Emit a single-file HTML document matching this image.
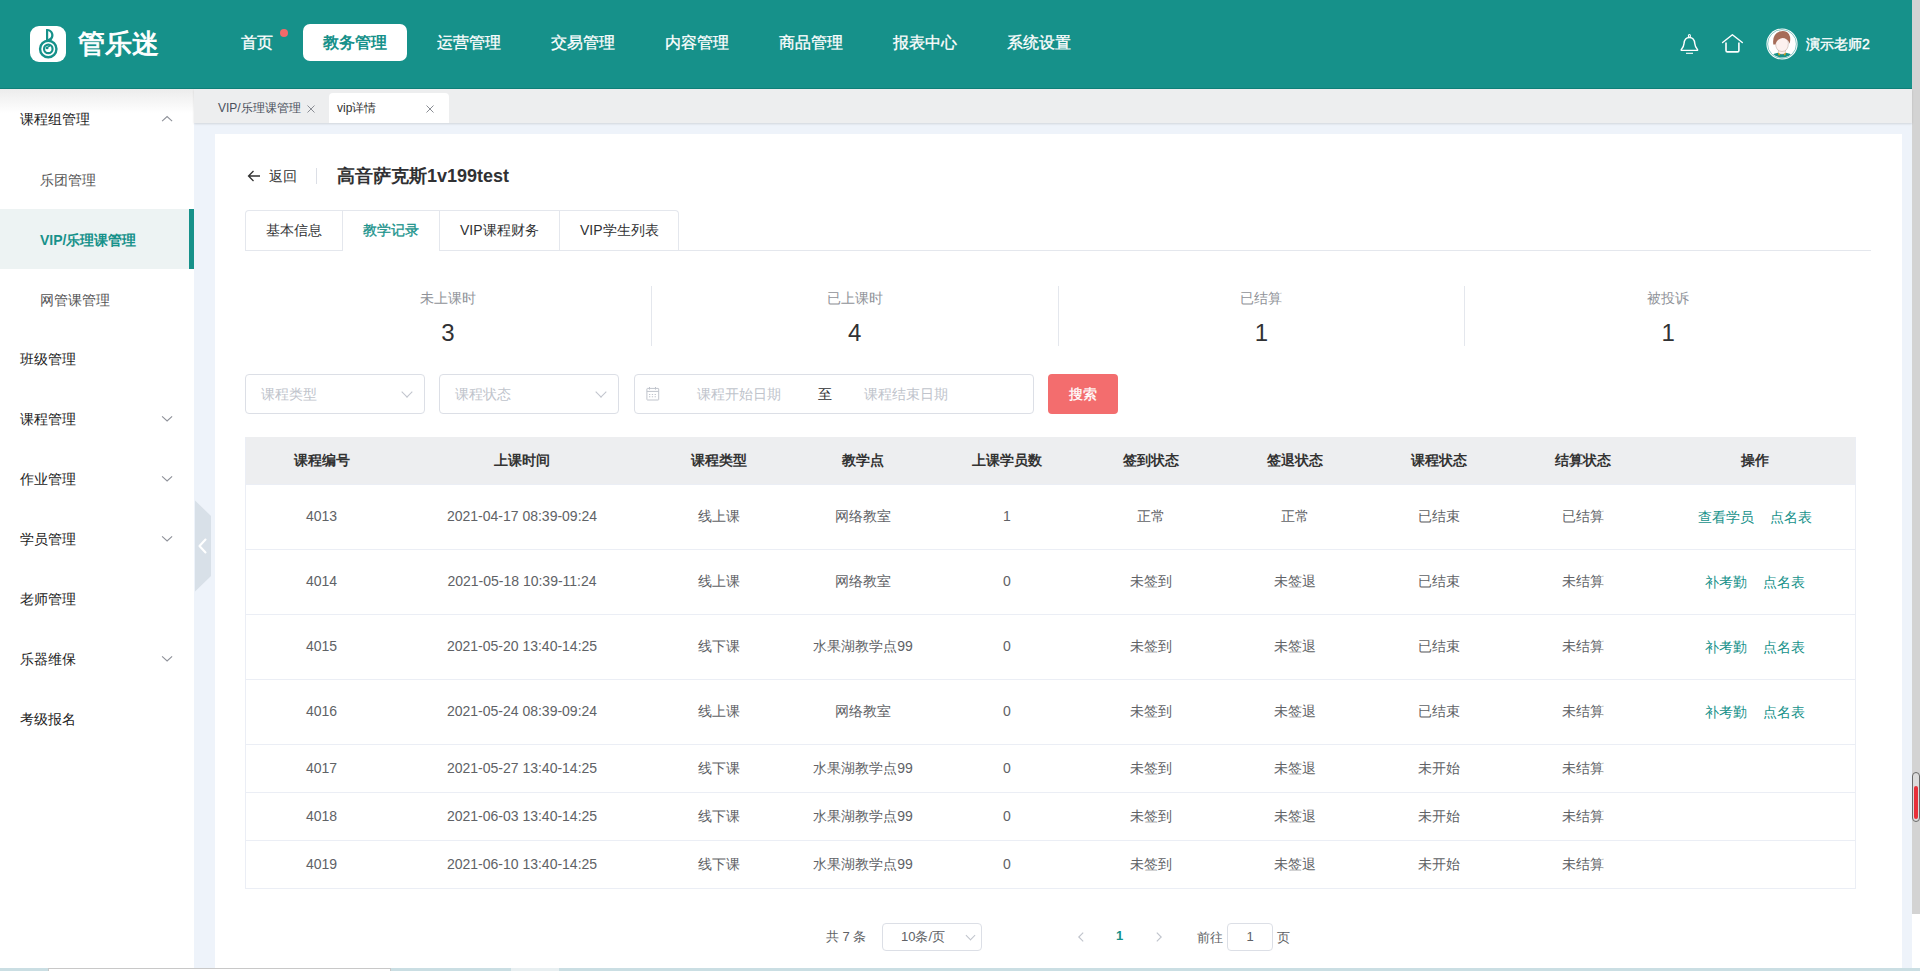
<!DOCTYPE html>
<html><head><meta charset="utf-8">
<style>
*{box-sizing:border-box;margin:0;padding:0}
html,body{width:1920px;height:971px;overflow:hidden;background:#fff;font-family:"Liberation Sans",sans-serif;}
.abs{position:absolute}
#hdr{position:absolute;left:0;top:0;width:1912px;height:89px;background:#16918A;border-bottom:1px solid #0f8079}
#logo{left:30px;top:26px;width:36px;height:36px;background:#fff;border-radius:9px}
#brand{left:78px;top:24px;font-size:27px;line-height:40px;color:#fff;letter-spacing:0px;-webkit-text-stroke:0.9px #fff}
.nav{position:absolute;top:24px;height:37px;line-height:37px;font-size:16px;color:#fff;white-space:nowrap;-webkit-text-stroke-width:0.3px}
.nav.on{background:#fff;color:#16918A;font-weight:bold;border-radius:7px;padding:0 20px;-webkit-text-stroke-width:0}
#dot{left:280px;top:29px;width:8px;height:8px;border-radius:50%;background:#f26a6a}
#uname{left:1806px;top:34px;font-size:14px;line-height:20px;color:#fff;-webkit-text-stroke-width:0.4px}
#scroll{left:1912px;top:0;width:8px;height:914px;background:#d3d3d3}
#side{left:0;top:89px;width:195px;height:879px;background:#fff;border-right:1px solid #e4e6ea}
#sideShadow{left:0;top:89px;width:194px;height:24px;background:linear-gradient(#ececec,rgba(255,255,255,0))}
.si{position:absolute;left:0;width:194px;height:60px;line-height:60px;font-size:14px;color:#222;padding-left:20px}
.si.sub{padding-left:40px;color:#555;line-height:62px}
.si.act{background:#EDF3F3;color:#16918A;font-weight:bold;width:194px}
.si.act:after{content:"";position:absolute;right:0;top:0;width:5px;height:60px;background:#16918A}
.chev{position:absolute;left:163px;top:26px;width:8px;height:8px;border-left:1px solid #999;border-bottom:1px solid #999;transform:rotate(-45deg)}
.chev.up{transform:rotate(135deg);top:29px}
#main{left:194px;top:89px;width:1718px;height:879px;background:#EEF3FA}
#tabs{left:194px;top:89px;width:1718px;height:34px;background:#EDEEEF;box-shadow:0 1px 2px rgba(0,0,0,0.12)}
.ttab{position:absolute;top:4px;height:30px;line-height:30px;font-size:12px;color:#4a505c}
#card{left:215px;top:134px;width:1687px;height:834px;background:#fff}
.txt{position:absolute;white-space:nowrap}
#taskbar{left:0;top:968px;width:1920px;height:3px;background:#CADEE3}
#tbl{position:absolute;left:245px;top:437px;width:1611px;border-left:1px solid #EBEEF5;border-right:1px solid #EBEEF5}
.tr{display:flex;border-bottom:1px solid #EBEEF5}
.tc{text-align:center;font-size:14px;color:#606266;white-space:nowrap;position:relative;top:-1px}
.th .tc{top:0}
.sm .tc{top:0}
.th{background:#EDEEF0}
.th .tc{font-weight:bold;color:#333}
.lk{color:#16918A;margin:0 8px;position:relative;top:1px}
.sel{position:absolute;border:1px solid #DCDFE6;border-radius:4px;background:#fff}
.ph{color:#C0C4CC;font-size:14px}
.dchev{position:absolute;width:8px;height:8px;border-left:1px solid #C0C4CC;border-bottom:1px solid #C0C4CC;transform:rotate(-45deg)}
</style></head><body>

<div id="hdr"></div>
<div id="logo" class="abs">
<svg width="36" height="36" viewBox="0 0 36 36">
 <circle cx="18.25" cy="23" r="8.2" fill="none" stroke="#16918A" stroke-width="2.4"/>
 <circle cx="18.3" cy="22.9" r="4.25" fill="none" stroke="#16918A" stroke-width="2.2"/>
 <circle cx="17.1" cy="21.9" r="1.45" fill="#16918A"/>
 <path fill="#16918A" d="M17.6 20.5 L19.6 19.3 L20.2 20.4 L18.4 21.6 Z"/>
 <path fill-rule="evenodd" fill="#16918A" d="M16 3 H17.5 C21.5 3.3 23.6 6.5 23.5 9.3 C23.4 11.5 22.6 12.8 21.5 14.2 L16 14.6 Z M18.2 4.9 C20.3 5.6 21.3 7.4 21.2 9.3 C21.1 10.9 20.3 12.2 18.2 12.9 Z"/>
</svg>
</div>
<div id="brand" class="abs">管乐迷</div>

<div class="nav" style="left:241px">首页</div>
<div id="dot" class="abs"></div>
<div class="nav on" style="left:303px">教务管理</div>
<div class="nav" style="left:437px">运营管理</div>
<div class="nav" style="left:551px">交易管理</div>
<div class="nav" style="left:665px">内容管理</div>
<div class="nav" style="left:779px">商品管理</div>
<div class="nav" style="left:893px">报表中心</div>
<div class="nav" style="left:1007px">系统设置</div>

<!-- bell -->
<svg class="abs" style="left:1679px;top:33px" width="22" height="22" viewBox="0 0 22 22">
 <path d="M10.4 4.5 C6.6 4.5 5.3 7.2 5 10.6 C4.7 13.4 3.7 15 2.5 16.2 Q1.5 17.4 3.1 17.4 H17.7 Q19.3 17.4 18.3 16.2 C17.1 15 16.1 13.4 15.8 10.6 C15.5 7.2 14.2 4.5 10.4 4.5 Z" fill="none" stroke="#fff" stroke-width="1.4" stroke-linejoin="round"/>
 <ellipse cx="10.4" cy="2.9" rx="1.05" ry="1.35" fill="none" stroke="#fff" stroke-width="1.1"/>
 <line x1="7" y1="20.3" x2="14" y2="20.3" stroke="#fff" stroke-width="1.1"/>
</svg>
<!-- home -->
<svg class="abs" style="left:1720px;top:33px" width="24" height="22" viewBox="0 0 24 22">
 <path d="M2.6 9.5 L12.4 1.7 L22.3 9.5" fill="none" stroke="#fff" stroke-width="1.45" stroke-linejoin="round" stroke-linecap="round"/>
 <path d="M6 9.4 V17.5 Q6 18.9 7.4 18.9 H17.5 Q18.9 18.9 18.9 17.5 V9.4" fill="none" stroke="#fff" stroke-width="1.6"/>
</svg>
<!-- avatar -->
<svg class="abs" style="left:1766px;top:28px" width="32" height="32" viewBox="0 0 32 32">
 <circle cx="16" cy="16" r="15.6" fill="#fff"/>
 <circle cx="16" cy="16" r="14.4" fill="none" stroke="#16918A" stroke-width="0.5"/>
 <clipPath id="cp"><circle cx="16" cy="16" r="13.6"/></clipPath>
 <g clip-path="url(#cp)">
  <path d="M1.5 32 Q3.5 26.4 11 25 L21 25 Q28.5 26.4 30.5 32 Z" fill="#16918A"/>
  <path d="M12.4 20 V25.6 Q16 27 19.4 25.6 V20 Z" fill="#FCEFEC" stroke="#8a6a60" stroke-width="0.3"/>
  <path d="M11.6 24.2 L14.5 26.6 L12.9 27.8 Z M20.4 24.2 L17.5 26.6 L19.1 27.8 Z" fill="#D9A010"/>
  <path d="M9.6 15.2 Q9.6 23.3 16 23.5 Q22.4 23.3 22.4 15.2 Q22.4 9.4 16 9.4 Q9.6 9.4 9.6 15.2 Z" fill="#FDF1EF" stroke="#8a6a60" stroke-width="0.3"/>
  <path d="M7.3 16.4 Q6 6.2 13.6 3.5 Q20 1.9 23 6.2 Q25.2 10 23.6 15.8 Q22.6 12.3 20.8 11.4 Q17.6 9.3 14.6 10.4 Q10.4 11.9 9.4 16.6 Z" fill="#A66C58"/>
 </g>
</svg>
<div id="uname" class="abs">演示老师2</div>

<div id="scroll" class="abs"></div>
<div class="abs" style="left:1912px;top:772px;width:8px;height:50px;border:1.6px solid #6a6a6a;border-radius:4px;background:#dcdcdc"></div>
<div class="abs" style="left:1914.3px;top:786px;width:3.4px;height:33px;background:#e8303a;border-radius:2px"></div>
<div class="abs" style="left:1912px;top:914px;width:8px;height:54px;background:#fff"></div>

<!-- sidebar -->
<div id="side" class="abs"></div>
<div id="sideShadow" class="abs"></div>
<div class="si" style="top:89px">课程组管理<svg class="abs" style="left:161px;top:26px" width="12" height="8" viewBox="0 0 12 8"><path d="M1.1 6.2 L6.1 1.5 L11.1 6.2" fill="none" stroke="#8E9199" stroke-width="1.1"/></svg></div>
<div class="si sub" style="top:149px">乐团管理</div>
<div class="si sub act" style="top:209px">VIP/乐理课管理</div>
<div class="si sub" style="top:269px">网管课管理</div>
<div class="si" style="top:329px">班级管理</div>
<div class="si" style="top:389px">课程管理<svg class="abs" style="left:161px;top:26px" width="12" height="8" viewBox="0 0 12 8"><path d="M1.1 1.3 L6.1 6 L11.1 1.3" fill="none" stroke="#8E9199" stroke-width="1.1"/></svg></div>
<div class="si" style="top:449px">作业管理<svg class="abs" style="left:161px;top:26px" width="12" height="8" viewBox="0 0 12 8"><path d="M1.1 1.3 L6.1 6 L11.1 1.3" fill="none" stroke="#8E9199" stroke-width="1.1"/></svg></div>
<div class="si" style="top:509px">学员管理<svg class="abs" style="left:161px;top:26px" width="12" height="8" viewBox="0 0 12 8"><path d="M1.1 1.3 L6.1 6 L11.1 1.3" fill="none" stroke="#8E9199" stroke-width="1.1"/></svg></div>
<div class="si" style="top:569px">老师管理</div>
<div class="si" style="top:629px">乐器维保<svg class="abs" style="left:161px;top:26px" width="12" height="8" viewBox="0 0 12 8"><path d="M1.1 1.3 L6.1 6 L11.1 1.3" fill="none" stroke="#8E9199" stroke-width="1.1"/></svg></div>
<div class="si" style="top:689px">考级报名</div>

<!-- main -->
<div id="main" class="abs"></div>
<svg class="abs" style="left:195px;top:500px" width="16" height="92" viewBox="0 0 16 92">
 <path d="M0 0.5 L16 16 V76 L0 91.5 Z" fill="#D8E0E8"/>
 <path d="M10.5 39.5 L4.5 46 L10.5 52.5" fill="none" stroke="#fff" stroke-width="2.1" stroke-linecap="round" stroke-linejoin="round"/>
</svg>
<div id="tabs" class="abs"></div>
<div class="ttab" style="left:218px;top:93px">VIP/乐理课管理</div>
<svg class="abs" style="left:306px;top:104px" width="10" height="10" viewBox="0 0 10 10"><path d="M1.5 1.5 L8.5 8.5 M8.5 1.5 L1.5 8.5" stroke="#8a8d94" stroke-width="1"/></svg>
<div class="abs" style="left:329px;top:93px;width:120px;height:30px;background:#fff;border-radius:4px 4px 0 0"></div>
<div class="ttab" style="left:337px;top:93px;color:#333">vip详情</div>
<svg class="abs" style="left:425px;top:104px" width="10" height="10" viewBox="0 0 10 10"><path d="M1.5 1.5 L8.5 8.5 M8.5 1.5 L1.5 8.5" stroke="#8a8d94" stroke-width="1"/></svg>

<div id="card" class="abs"></div>

<!-- title -->
<svg class="abs" style="left:247px;top:169px" width="14" height="14" viewBox="0 0 14 14"><path d="M13 7 H1.5 M6.5 2 L1.5 7 L6.5 12" fill="none" stroke="#333" stroke-width="1.3"/></svg>
<div class="txt" style="left:269px;top:166px;font-size:14px;line-height:20px;color:#333">返回</div>
<div class="abs" style="left:316px;top:168px;width:1px;height:16px;background:#DCDFE6"></div>
<div class="txt" style="left:337px;top:164px;font-size:18px;line-height:24px;color:#303133;font-weight:bold">高音萨克斯1v199test</div>

<!-- tabs -->
<div class="abs" style="left:245px;top:210px;width:434px;height:41px;border:1px solid #E4E7ED;border-bottom:none;border-radius:4px 4px 0 0"></div>
<div class="abs" style="left:245px;top:250px;width:97px;height:1px;background:#E4E7ED"></div>
<div class="abs" style="left:439px;top:250px;width:1432px;height:1px;background:#E4E7ED"></div>
<div class="abs" style="left:342px;top:211px;width:1px;height:40px;background:#E4E7ED"></div>
<div class="abs" style="left:439px;top:211px;width:1px;height:40px;background:#E4E7ED"></div>
<div class="abs" style="left:559px;top:211px;width:1px;height:40px;background:#E4E7ED"></div>
<div class="txt" style="left:266px;top:220px;font-size:14px;line-height:20px;color:#303133">基本信息</div>
<div class="txt" style="left:363px;top:220px;font-size:14px;line-height:20px;color:#16918A;-webkit-text-stroke-width:0.3px">教学记录</div>
<div class="txt" style="left:460px;top:220px;font-size:14px;line-height:20px;color:#303133">VIP课程财务</div>
<div class="txt" style="left:580px;top:220px;font-size:14px;line-height:20px;color:#303133">VIP学生列表</div>

<!-- stats -->
<div class="abs" style="left:245px;top:286px;width:1626px;height:60px;display:flex">
 <div style="flex:1;text-align:center;border-right:1px solid #E4E7ED"><div style="font-size:14px;line-height:18px;color:#909399;margin-top:3px">未上课时</div><div style="font-size:24px;line-height:28px;color:#303133;margin-top:12px">3</div></div>
 <div style="flex:1;text-align:center;border-right:1px solid #E4E7ED"><div style="font-size:14px;line-height:18px;color:#909399;margin-top:3px">已上课时</div><div style="font-size:24px;line-height:28px;color:#303133;margin-top:12px">4</div></div>
 <div style="flex:1;text-align:center;border-right:1px solid #E4E7ED"><div style="font-size:14px;line-height:18px;color:#909399;margin-top:3px">已结算</div><div style="font-size:24px;line-height:28px;color:#303133;margin-top:12px">1</div></div>
 <div style="flex:1;text-align:center"><div style="font-size:14px;line-height:18px;color:#909399;margin-top:3px">被投诉</div><div style="font-size:24px;line-height:28px;color:#303133;margin-top:12px">1</div></div>
</div>

<!-- filters -->
<div class="sel" style="left:245px;top:374px;width:180px;height:40px"><span class="txt ph" style="left:15px;top:9px;line-height:20px">课程类型</span><span class="dchev" style="left:157px;top:13px"></span></div>
<div class="sel" style="left:439px;top:374px;width:180px;height:40px"><span class="txt ph" style="left:15px;top:9px;line-height:20px">课程状态</span><span class="dchev" style="left:157px;top:13px"></span></div>
<div class="sel" style="left:634px;top:374px;width:400px;height:40px">
 <svg class="abs" style="left:11px;top:12px" width="14" height="14" viewBox="0 0 14 14"><rect x="0.9" y="1.4" width="11.8" height="11.6" rx="0.6" fill="none" stroke="#C0C4CC" stroke-width="1"/><line x1="0.9" y1="4.4" x2="12.7" y2="4.4" stroke="#C0C4CC" stroke-width="1"/><line x1="3.5" y1="0" x2="3.5" y2="2.6" stroke="#C0C4CC" stroke-width="1"/><line x1="9.5" y1="0" x2="9.5" y2="2.6" stroke="#C0C4CC" stroke-width="1"/><path d="M3 7h1.3v1h-1.3zM5.8 7h1.3v1h-1.3zM8.6 7h1.3v1h-1.3zM3 9.3h1.3v1h-1.3zM5.8 9.3h1.3v1h-1.3zM8.6 9.3h1.3v1h-1.3z" fill="#C0C4CC"/></svg>
 <span class="txt ph" style="left:62px;top:9px;line-height:20px">课程开始日期</span>
 <span class="txt" style="left:183px;top:9px;line-height:20px;font-size:14px;color:#303133">至</span>
 <span class="txt ph" style="left:229px;top:9px;line-height:20px">课程结束日期</span>
</div>
<div class="abs" style="left:1048px;top:374px;width:70px;height:40px;background:#F36D6E;border-radius:4px;color:#fff;font-size:14px;line-height:40px;text-align:center;-webkit-text-stroke-width:0.3px">搜索</div>

<!-- table -->
<div id="tbl">
<div class="tr th" style="height:48px"><div class="tc" style="width:151px;line-height:47px">课程编号</div><div class="tc" style="width:250px;line-height:47px">上课时间</div><div class="tc" style="width:144px;line-height:47px">课程类型</div><div class="tc" style="width:144px;line-height:47px">教学点</div><div class="tc" style="width:144px;line-height:47px">上课学员数</div><div class="tc" style="width:144px;line-height:47px">签到状态</div><div class="tc" style="width:144px;line-height:47px">签退状态</div><div class="tc" style="width:144px;line-height:47px">课程状态</div><div class="tc" style="width:144px;line-height:47px">结算状态</div><div class="tc" style="width:200px;line-height:47px">操作</div></div>
<div class="tr" style="height:65px"><div class="tc" style="width:151px;line-height:64px">4013</div><div class="tc" style="width:250px;line-height:64px">2021-04-17 08:39-09:24</div><div class="tc" style="width:144px;line-height:64px">线上课</div><div class="tc" style="width:144px;line-height:64px">网络教室</div><div class="tc" style="width:144px;line-height:64px">1</div><div class="tc" style="width:144px;line-height:64px">正常</div><div class="tc" style="width:144px;line-height:64px">正常</div><div class="tc" style="width:144px;line-height:64px">已结束</div><div class="tc" style="width:144px;line-height:64px">已结算</div><div class="tc" style="width:200px;line-height:64px"><span class="lk">查看学员</span><span class="lk">点名表</span></div></div>
<div class="tr" style="height:65px"><div class="tc" style="width:151px;line-height:64px">4014</div><div class="tc" style="width:250px;line-height:64px">2021-05-18 10:39-11:24</div><div class="tc" style="width:144px;line-height:64px">线上课</div><div class="tc" style="width:144px;line-height:64px">网络教室</div><div class="tc" style="width:144px;line-height:64px">0</div><div class="tc" style="width:144px;line-height:64px">未签到</div><div class="tc" style="width:144px;line-height:64px">未签退</div><div class="tc" style="width:144px;line-height:64px">已结束</div><div class="tc" style="width:144px;line-height:64px">未结算</div><div class="tc" style="width:200px;line-height:64px"><span class="lk">补考勤</span><span class="lk">点名表</span></div></div>
<div class="tr" style="height:65px"><div class="tc" style="width:151px;line-height:64px">4015</div><div class="tc" style="width:250px;line-height:64px">2021-05-20 13:40-14:25</div><div class="tc" style="width:144px;line-height:64px">线下课</div><div class="tc" style="width:144px;line-height:64px">水果湖教学点99</div><div class="tc" style="width:144px;line-height:64px">0</div><div class="tc" style="width:144px;line-height:64px">未签到</div><div class="tc" style="width:144px;line-height:64px">未签退</div><div class="tc" style="width:144px;line-height:64px">已结束</div><div class="tc" style="width:144px;line-height:64px">未结算</div><div class="tc" style="width:200px;line-height:64px"><span class="lk">补考勤</span><span class="lk">点名表</span></div></div>
<div class="tr" style="height:65px"><div class="tc" style="width:151px;line-height:64px">4016</div><div class="tc" style="width:250px;line-height:64px">2021-05-24 08:39-09:24</div><div class="tc" style="width:144px;line-height:64px">线上课</div><div class="tc" style="width:144px;line-height:64px">网络教室</div><div class="tc" style="width:144px;line-height:64px">0</div><div class="tc" style="width:144px;line-height:64px">未签到</div><div class="tc" style="width:144px;line-height:64px">未签退</div><div class="tc" style="width:144px;line-height:64px">已结束</div><div class="tc" style="width:144px;line-height:64px">未结算</div><div class="tc" style="width:200px;line-height:64px"><span class="lk">补考勤</span><span class="lk">点名表</span></div></div>
<div class="tr sm" style="height:48px"><div class="tc" style="width:151px;line-height:47px">4017</div><div class="tc" style="width:250px;line-height:47px">2021-05-27 13:40-14:25</div><div class="tc" style="width:144px;line-height:47px">线下课</div><div class="tc" style="width:144px;line-height:47px">水果湖教学点99</div><div class="tc" style="width:144px;line-height:47px">0</div><div class="tc" style="width:144px;line-height:47px">未签到</div><div class="tc" style="width:144px;line-height:47px">未签退</div><div class="tc" style="width:144px;line-height:47px">未开始</div><div class="tc" style="width:144px;line-height:47px">未结算</div><div class="tc" style="width:200px;line-height:47px"></div></div>
<div class="tr sm" style="height:48px"><div class="tc" style="width:151px;line-height:47px">4018</div><div class="tc" style="width:250px;line-height:47px">2021-06-03 13:40-14:25</div><div class="tc" style="width:144px;line-height:47px">线下课</div><div class="tc" style="width:144px;line-height:47px">水果湖教学点99</div><div class="tc" style="width:144px;line-height:47px">0</div><div class="tc" style="width:144px;line-height:47px">未签到</div><div class="tc" style="width:144px;line-height:47px">未签退</div><div class="tc" style="width:144px;line-height:47px">未开始</div><div class="tc" style="width:144px;line-height:47px">未结算</div><div class="tc" style="width:200px;line-height:47px"></div></div>
<div class="tr sm" style="height:48px"><div class="tc" style="width:151px;line-height:47px">4019</div><div class="tc" style="width:250px;line-height:47px">2021-06-10 13:40-14:25</div><div class="tc" style="width:144px;line-height:47px">线下课</div><div class="tc" style="width:144px;line-height:47px">水果湖教学点99</div><div class="tc" style="width:144px;line-height:47px">0</div><div class="tc" style="width:144px;line-height:47px">未签到</div><div class="tc" style="width:144px;line-height:47px">未签退</div><div class="tc" style="width:144px;line-height:47px">未开始</div><div class="tc" style="width:144px;line-height:47px">未结算</div><div class="tc" style="width:200px;line-height:47px"></div></div>
</div>

<!-- pagination -->
<div class="txt" style="left:826px;top:928px;font-size:13px;line-height:18px;color:#606266">共 7 条</div>
<div class="sel" style="left:882px;top:923px;width:100px;height:28px"><span class="txt" style="left:18px;top:4px;font-size:13px;line-height:18px;color:#606266">10条/页</span><span class="dchev" style="left:84px;top:8px;width:7px;height:7px"></span></div>
<svg class="abs" style="left:1076px;top:930px" width="10" height="14" viewBox="0 0 10 14"><path d="M7.2 2.6 L2.8 7 L7.2 11.4" fill="none" stroke="#C0C4CC" stroke-width="1.15"/></svg>
<div class="txt" style="left:1116px;top:927px;font-size:13px;line-height:18px;color:#16918A;font-weight:bold">1</div>
<svg class="abs" style="left:1154px;top:930px" width="10" height="14" viewBox="0 0 10 14"><path d="M2.8 2.6 L7.2 7 L2.8 11.4" fill="none" stroke="#C0C4CC" stroke-width="1.15"/></svg>
<div class="txt" style="left:1197px;top:929px;font-size:13px;line-height:18px;color:#606266">前往</div>
<div class="sel" style="left:1227px;top:923px;width:46px;height:28px;text-align:center;font-size:13px;line-height:26px;color:#606266">1</div>
<div class="txt" style="left:1277px;top:929px;font-size:13px;line-height:18px;color:#606266">页</div>

<div id="taskbar" class="abs"></div>
<div class="abs" style="left:48px;top:968px;width:343px;height:3px;background:#fff;border:1px solid #c8c8c8;border-bottom:none"></div>
<div class="abs" style="left:511px;top:968px;width:48px;height:3px;background:#E8EFF1"></div>
</body></html>
